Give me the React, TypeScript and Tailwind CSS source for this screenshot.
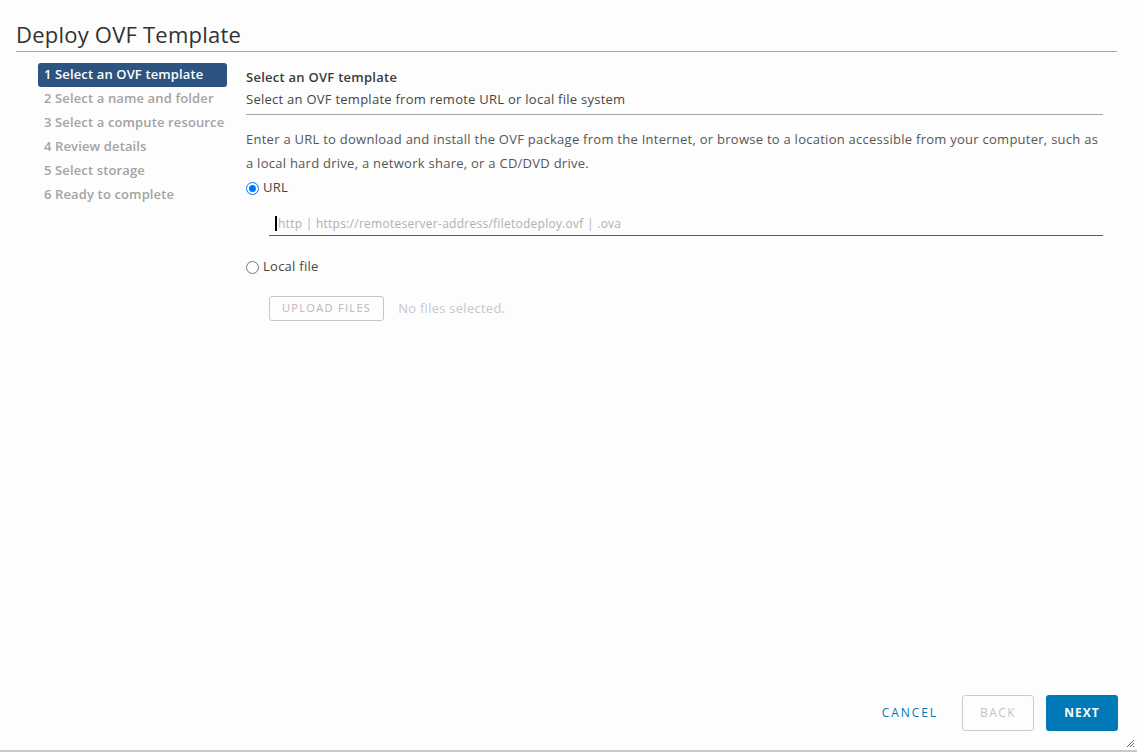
import React from 'react';

const steps = [
  '1 Select an OVF template',
  '2 Select a name and folder',
  '3 Select a compute resource',
  '4 Review details',
  '5 Select storage',
  '6 Ready to complete',
];

function Radio({ checked }: { checked?: boolean }) {
  return (
    <span
      className={
        'inline-flex h-[13px] w-[13px] items-center justify-center rounded-full border ' +
        (checked ? 'border-[#0075ff] bg-white' : 'border-[#767676] bg-white')
      }
    >
      {checked && <span className="h-[7px] w-[7px] rounded-full bg-[#0075ff]" />}
    </span>
  );
}

export default function App() {
  return (
    <div className="flex h-[752px] w-[1137px] flex-col overflow-hidden border-b-2 border-[#c8c8c8] bg-[#fdfdfd] font-['Open_Sans',sans-serif] text-[13px] tracking-[0.02em] text-[#565656]">
      <div className="ml-4 mr-5 border-b border-[#a6a6a6] pt-[20px] pb-[3px]">
        <h1 className="text-[22px] leading-[28px] tracking-[0.01em] text-[#313131]">Deploy OVF Template</h1>
      </div>

      <div className="flex flex-1 pt-[11px]">
        <div className="ml-[38px] flex w-[189px] flex-col">
          {steps.map((s, i) => (
            <div
              key={s}
              className={
                'h-6 whitespace-nowrap rounded-[3px] px-[6px] leading-[23px] font-semibold tracking-[0.01em] ' +
                (i === 0 ? 'bg-[#2d5480] text-white' : 'text-[#a3a3a3]')
              }
            >
              {s}
            </div>
          ))}
        </div>

        <div className="ml-[19px] mr-[34px] flex-1">
          <div className="border-b border-[#a6a6a6] pb-[4px]">
            <div className="pt-[3px] leading-[22px] font-semibold text-[#3a3a3a]">Select an OVF template</div>
            <div className="leading-[22px] text-[#464646]">Select an OVF template from remote URL or local file system</div>
          </div>

          <p className="mt-[12px] leading-[24px]">
            Enter a URL to download and install the OVF package from the Internet, or browse to a location accessible from your computer, such as a local hard drive, a network share, or a CD/DVD drive.
          </p>

          <label className="mt-[1px] flex h-6 items-center gap-[4px]">
            <Radio checked />
            <span className="text-[#464646]">URL</span>
          </label>

          <div className="ml-[23px] mt-[12px] flex h-[24px] items-center border-b border-[#0079b8] pl-[6px]">
            <span className="mr-[1px] h-[15px] w-[2px] bg-black" />
            <span className="text-[12px] text-[#b0b0b0]">http | https://remoteserver-address/filetodeploy.ovf | .ova</span>
          </div>

          <label className="mt-[19px] flex h-6 items-center gap-[4px]">
            <Radio />
            <span className="text-[#464646]">Local file</span>
          </label>

          <div className="ml-[23px] mt-[17px] flex items-center gap-[14px]">
            <button className="h-[25px] rounded-[3px] border border-[#c5c5c5] px-[12px] text-[11px] tracking-[0.12em] text-[#b8b8b8]">
              UPLOAD FILES
            </button>
            <span className="text-[#c8c8c8]">No files selected.</span>
          </div>
        </div>
      </div>

      <div className="relative flex items-center justify-end gap-3 pr-[19px] pb-[19px]">
        <button className="h-9 px-[12px] text-[12px] font-medium tracking-[0.16em] text-[#0079b8]">CANCEL</button>
        <button className="h-9 w-[72px] rounded-[3px] border border-[#cccccc] text-[12px] tracking-[0.12em] text-[#c4c4c4]">BACK</button>
        <button className="h-9 w-[72px] rounded-[3px] bg-[#0079b8] text-[12px] font-bold tracking-[0.08em] text-white">NEXT</button>
        <svg className="absolute right-[2px] bottom-[2px]" width="9" height="9" viewBox="0 0 9 9">
          <path d="M8 1L1 8M8 4L4 8M8 7L7 8" stroke="#666" strokeWidth="1" />
        </svg>
      </div>
    </div>
  );
}
